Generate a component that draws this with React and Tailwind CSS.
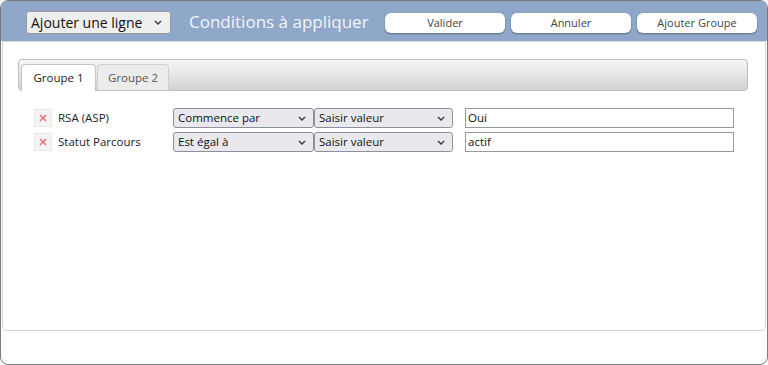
import React from "react";

const font = { fontFamily: '"Open Sans", "Noto Sans", sans-serif' };

function Chevron() {
  return (
    <svg width="8" height="5" viewBox="0 0 8 5" className="shrink-0">
      <path d="M1 1 L4 4 L7 1" fill="none" stroke="#333" strokeWidth="1.3" />
    </svg>
  );
}

function FakeSelect({ text, className }) {
  return (
    <div
      className={
        "flex items-center justify-between rounded-[3px] border border-[#8f8f9d] bg-[#e9e9ed] pl-[4px] pr-[7px] text-[11.5px] text-[#111] " +
        className
      }
    >
      <span className="leading-none">{text}</span>
      <Chevron />
    </div>
  );
}

function Row({ label, op, value }) {
  return (
    <div className="flex h-[20px] items-center">
      <div className="flex h-[18px] w-[18px] items-center justify-center border border-[#e8e8e8] bg-[#f4f4f4]">
        <svg width="8" height="8" viewBox="0 0 8 8">
          <path d="M1 1 L7 7 M7 1 L1 7" stroke="#e46a6a" strokeWidth="1.4" />
        </svg>
      </div>
      <div className="ml-[6px] w-[115px] text-[11.5px] text-[#222]">{label}</div>
      <FakeSelect text={op} className="h-[20px] w-[141px]" />
      <FakeSelect text="Saisir valeur" className="h-[20px] w-[139px]" />
      <div className="ml-[12px] flex h-[20px] w-[269px] items-center border border-[#999] bg-white pl-[2px] text-[11.5px] text-[#111]">
        {value}
      </div>
    </div>
  );
}

function HeaderButton({ children }) {
  return (
    <button className="h-[20px] w-[120px] rounded-[6px] bg-white text-[11px] text-[#444] shadow-[0_1px_2px_rgba(0,0,0,0.35)]">
      {children}
    </button>
  );
}

export default function App() {
  return (
    <div style={font} className="h-[365px] w-[768px] bg-white">
      <div className="flex h-[365px] w-[768px] flex-col overflow-hidden rounded-[8px] border border-[#7a7a7a] bg-white">
        <div className="flex h-[40px] shrink-0 items-start bg-[#8fa7c9] pl-[25px] pr-[10px] pt-[10px]">
          <div className="flex h-[23px] w-[145px] items-center justify-between rounded-[3px] border border-[#9a9a9a] bg-[#efefef] pl-[4px] pr-[8px] text-[14px] text-[#111]">
            <span>Ajouter une ligne</span>
            <Chevron />
          </div>
          <div className="ml-[18px] text-[17px] leading-[22px] text-[#f2f5fa]">Conditions à appliquer</div>
          <div className="ml-auto mt-[2px] flex gap-[6px]">
            <HeaderButton>Valider</HeaderButton>
            <HeaderButton>Annuler</HeaderButton>
            <HeaderButton>Ajouter Groupe</HeaderButton>
          </div>
        </div>
        <div className="mx-[1px] flex h-[290px] shrink-0 flex-col rounded-b-[4px] border border-[#d4d4d4] pl-[15px] pr-[17px] pt-[17px]">
          <div className="flex h-[32px] items-end rounded-[4px] border border-[#bdbdbd] bg-gradient-to-b from-[#f6f6f6] to-[#d3d3d3] pl-[2px]">
            <div className="-mb-px flex h-[27px] w-[75px] items-center justify-center rounded-t-[4px] border border-b-0 border-[#c4c4c4] bg-white text-[11.5px] text-[#222]">
              Groupe 1
            </div>
            <div className="ml-[1px] flex h-[26px] w-[72px] items-center justify-center rounded-t-[4px] border border-b-0 border-[#cfcfcf] bg-[#ececec] text-[11.5px] text-[#555]">
              Groupe 2
            </div>
          </div>
          <div className="mt-[17px] flex flex-col gap-[4px] pl-[16px]">
            <Row label="RSA (ASP)" op="Commence par" value="Oui" />
            <Row label="Statut Parcours" op="Est égal à" value="actif" />
          </div>
        </div>
        <div className="flex-1" />
      </div>
    </div>
  );
}
